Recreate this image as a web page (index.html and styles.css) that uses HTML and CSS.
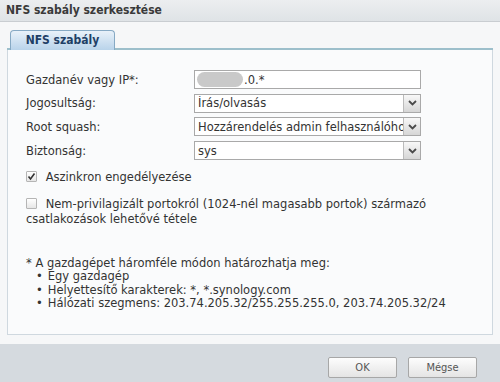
FILE: index.html
```html
<!DOCTYPE html>
<html lang="hu">
<head>
    <meta charset="UTF-8">
    <meta name="viewport" content="width=device-width, initial-scale=1.0">
    <title>NFS szabály szerkesztése</title>
    <link rel="stylesheet" href="styles.css">
</head>
<body>
    <div class="dialog">
        <div class="titlebar">NFS szabály szerkesztése</div>

        <div class="content">
            <!-- Fülek -->
            <div class="tabs">
                <div class="tab">NFS szabály</div>
            </div>

            <div class="panel">
                <div class="form-grid">
                    <label>Gazdanév vagy IP*:</label>
                    <div class="field"><span class="blur"></span>.0.*</div>

                    <label>Jogosultság:</label>
                    <div class="field select">
                        <span class="value">Írás/olvasás</span>
                        <span class="arrow"><svg width="9" height="6" viewBox="0 0 9 6"><path d="M1 1 L4.5 4.5 L8 1" fill="none" stroke="#4a4a4a" stroke-width="1.8"/></svg></span>
                    </div>

                    <label>Root squash:</label>
                    <div class="field select">
                        <span class="value">Hozzárendelés admin felhasználóhoz</span>
                        <span class="arrow"><svg width="9" height="6" viewBox="0 0 9 6"><path d="M1 1 L4.5 4.5 L8 1" fill="none" stroke="#4a4a4a" stroke-width="1.8"/></svg></span>
                    </div>

                    <label>Biztonság:</label>
                    <div class="field select">
                        <span class="value">sys</span>
                        <span class="arrow"><svg width="9" height="6" viewBox="0 0 9 6"><path d="M1 1 L4.5 4.5 L8 1" fill="none" stroke="#4a4a4a" stroke-width="1.8"/></svg></span>
                    </div>
                </div>

                <div class="check first">
                    <span class="box checked"><svg width="9" height="9" viewBox="0 0 9 9"><path d="M1.5 4.5 L3.5 7 L7.5 1.5" fill="none" stroke="#333" stroke-width="1.6"/></svg></span>
                    Aszinkron engedélyezése
                </div>
                <div class="check">
                    <span class="box"></span>
                    Nem-privilagizált portokról (1024-nél magasabb portok) származó csatlakozások lehetővé tétele
                </div>

                <div class="note">
                    <div>* A gazdagépet háromféle módon határozhatja meg:</div>
                    <ul>
                        <li>Egy gazdagép</li>
                        <li>Helyettesítő karakterek: *, *.synology.com</li>
                        <li>Hálózati szegmens: 203.74.205.32/255.255.255.0, 203.74.205.32/24</li>
                    </ul>
                </div>
            </div>
        </div>

        <div class="footer">
            <button>OK</button>
            <button>Mégse</button>
        </div>
    </div>
</body>
</html>
```

FILE: styles.css
```css
body {
    margin: 0;
    font-family: "DejaVu Sans", sans-serif;
    font-size: 11.5px;
    color: #333;
}
.dialog {
    width: 500px;
    height: 382px;
    display: flex;
    flex-direction: column;
    background: #f6f7f8;
}
.titlebar {
    height: 21px;
    line-height: 21px;
    padding-left: 6px;
    font-family: "DejaVu Sans Condensed", "DejaVu Sans", sans-serif;
    font-weight: bold;
    font-size: 12px;
    color: #3a3a3a;
    background: linear-gradient(#eceef0, #dfe3e6);
    border-bottom: 1px solid #c9cdd1;
}
.content {
    flex: 1;
    padding: 8px 7px 7px 7px;
}
.tabs {
    display: flex;
    padding-left: 3px;
    border-bottom: 2px solid #9dbfcb;
}
.tab {
    width: 103px;
    height: 18px;
    line-height: 18px;
    margin-bottom: -2px;
    text-align: center;
    font-family: "DejaVu Sans Condensed", "DejaVu Sans", sans-serif;
    font-weight: bold;
    font-size: 12px;
    color: #1f3f66;
    background: linear-gradient(#e8f1f9, #b9d3ea);
    border: 1px solid #86a9c4;
    border-bottom: none;
    border-radius: 4px 4px 0 0;
    padding-bottom: 1px;
}
.panel {
    height: 264px;
    padding: 20px 18px 0 18px;
    background: #fafbfc;
    border: 1px solid #cfd8df;
    border-top: none;
}
.form-grid {
    display: grid;
    grid-template-columns: 168px 227px;
    grid-auto-rows: 19px;
    row-gap: 4.7px;
    align-items: center;
}
.field {
    height: 19px;
    box-sizing: border-box;
    border: 1px solid #a9a9a9;
    background: #fff;
    display: flex;
    align-items: center;
    padding-left: 2px;
    overflow: hidden;
    white-space: nowrap;
}
.blur {
    display: inline-block;
    width: 46px;
    height: 15px;
    border-radius: 8px;
    background: #c9c9c9;
    margin-right: 1px;
}
.select {
    padding-left: 3px;
}
.select .value {
    flex: 1;
    overflow: hidden;
}
.select .arrow {
    width: 16px;
    height: 17px;
    display: flex;
    align-items: center;
    justify-content: center;
    border-left: 1px solid #bbb;
    background: linear-gradient(#f8f8f8, #d6d6d6);
}
.check {
    line-height: 15px;
}
.check.first {
    margin-top: 10px;
    margin-bottom: 12px;
}
.box {
    display: inline-block;
    width: 9px;
    height: 9px;
    border: 1px solid #b5b5b5;
    background: linear-gradient(#fff, #e6e6e6);
    vertical-align: -1px;
    margin-right: 5px;
    border-radius: 1px;
    position: relative;
}
.box svg {
    position: absolute;
    left: 0;
    top: 0;
}
.note {
    margin-top: 30px;
    line-height: 13.3px;
}
.note ul {
    margin: 0;
    padding-left: 10px;
    list-style: none;
}
.note li::before {
    content: "\2022";
    margin-right: 5px;
}
.footer {
    height: 38px;
    background: #d5dadf;
    display: flex;
    justify-content: flex-end;
    align-items: center;
    gap: 11px;
    padding-right: 23px;
    padding-top: 8px;
    box-sizing: border-box;
}
button {
    width: 69px;
    height: 21px;
    font-family: "DejaVu Sans Condensed", "DejaVu Sans", sans-serif;
    font-size: 11px;
    color: #555;
    background: linear-gradient(#fdfdfd, #e4e4e4);
    border: 1px solid #a7a7a7;
    border-radius: 2px;
    cursor: pointer;
}
```
